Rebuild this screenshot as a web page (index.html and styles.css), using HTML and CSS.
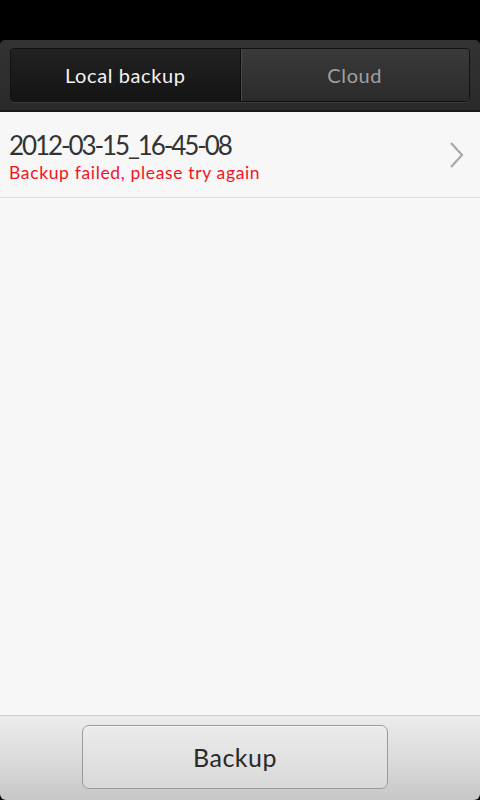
FILE: index.html
```html
<!DOCTYPE html>
<html>
<head>
<meta charset="utf-8">
<link rel="stylesheet" href="styles.css">
</head>
<body>
<div class="screen">
  <div class="statusbar"></div>
  <div class="header">
    <div class="segmented">
      <div class="seg seg-active">Local backup</div>
      <div class="seg seg-inactive">Cloud</div>
    </div>
  </div>
  <div class="content">
    <div class="row">
      <div class="row-text">
        <div class="row-title">2012-03-15_16-45-08</div>
        <div class="row-sub">Backup failed, please try again</div>
      </div>
      <svg class="chevron" width="16" height="26" viewBox="0 0 16 26"><path d="M2 1 L13 13 L2 25" fill="none" stroke="#a8a8a8" stroke-width="2.2"/></svg>
    </div>
  </div>
  <div class="footer">
    <div class="btn">Backup</div>
  </div>
</div>
</body>
</html>
```

FILE: styles.css
```css
html, body {
  margin: 0;
  padding: 0;
  background: #000;
}
.screen {
  width: 480px;
  height: 800px;
  display: flex;
  flex-direction: column;
  font-family: "Lato", "Noto Sans", sans-serif;
  background: #000;
}
.statusbar {
  height: 40px;
  background: #000;
}
.header {
  height: 72px;
  box-sizing: border-box;
  background: linear-gradient(#333 0%, #2a2a2a 100%);
  border-radius: 5px 5px 0 0;
  padding: 8px 10px 0 10px;
  border-bottom: 2px solid #1a1a1a;
}
.segmented {
  display: flex;
  height: 54px;
  box-sizing: border-box;
  border: 1px solid #111;
  border-radius: 4px;
  overflow: hidden;
  box-shadow: 0 1px 0 #3a3a3a;
}
.seg {
  flex: 1;
  display: flex;
  align-items: center;
  justify-content: center;
  font-size: 20px;
  letter-spacing: 0.6px;
}
.seg-active {
  background: linear-gradient(#222 0%, #141414 100%);
  color: #f2f2f2;
  border-right: 1px solid #0c0c0c;
}
.seg-inactive {
  background: linear-gradient(#3a3a3a 0%, #2b2b2b 100%);
  color: #a0a0a0;
  box-shadow: inset 1px 0 0 #4a4a4a;
}
.content {
  flex: 1;
  background: #f7f7f7;
}
.row {
  height: 86px;
  box-sizing: border-box;
  border-bottom: 1px solid #dcdcdc;
  display: flex;
  align-items: center;
  padding: 0 15px 0 9px;
}
.row-text {
  flex: 1;
  margin-top: 5px;
}
.row-title {
  font-size: 26px;
  color: #333;
  line-height: 32px;
  letter-spacing: -2.1px;
}
.row-sub {
  font-size: 17.5px;
  color: #f0141e;
  line-height: 24px;
  letter-spacing: 0.65px;
}
.chevron {
  display: block;
}
.footer {
  height: 85px;
  box-sizing: border-box;
  background: linear-gradient(#ececec 0%, #d8d8d8 60%, #c6c6c6 100%);
  border-top: 1px solid #d0d0d0;
  border-radius: 0 0 6px 6px;
  padding: 9px 0 0 82px;
  display: flex;
  align-items: flex-start;
}
.btn {
  width: 306px;
  height: 64px;
  box-sizing: border-box;
  border: 1px solid #9a9a9a;
  border-radius: 7px;
  background: linear-gradient(#ebebeb 0%, #d9d9d9 100%);
  display: flex;
  align-items: center;
  justify-content: center;
  font-size: 25px;
  letter-spacing: 0.5px;
  color: #2a2a2a;
  box-shadow: inset 0 1px 0 #f6f6f6;
}
```
